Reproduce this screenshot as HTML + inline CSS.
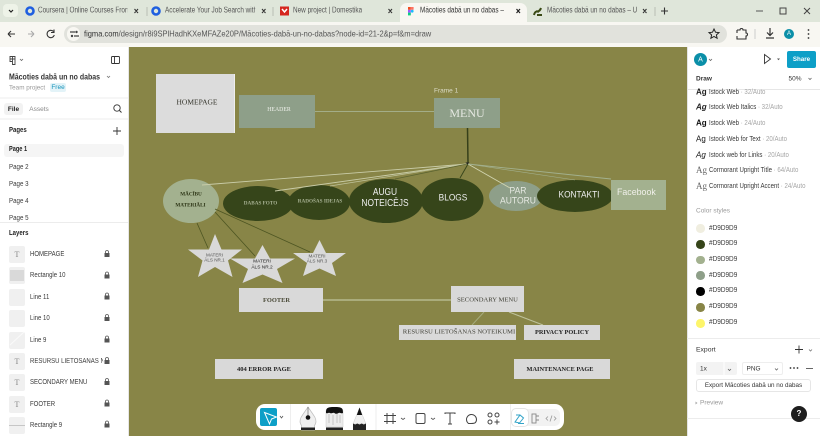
<!DOCTYPE html>
<html><head><meta charset="utf-8">
<style>
html,body{margin:0;padding:0;width:820px;height:436px;overflow:hidden;background:#fff;font-family:"Liberation Sans",sans-serif;}
body{filter:blur(.25px);}
.a{position:absolute;white-space:nowrap;}
.t{position:absolute;white-space:nowrap;transform:translateY(-50%) scaleX(var(--x,1));transform-origin:0 50%;line-height:1.1;}
.c{position:absolute;white-space:nowrap;transform:translate(-50%,-50%) scaleX(var(--x,1));line-height:1;text-align:center;}
.s{font-family:"Liberation Serif",serif;}
.b{position:absolute;background:#d9d9d9;}
.tab{font-size:7.800px;--x:.82;color:#555;overflow:hidden;}
.l{font-size:7px;--x:.86;color:#3a3a3a;}
.r{font-size:7px;--x:.87;color:#3a3a3a;}
.r span{color:#a5a5a5;}
svg{position:absolute;overflow:visible;}
</style></head><body>
<!-- tab strip -->
<div class="a" style="left:0;top:0;width:820px;height:22px;background:#dfe6da"></div>
<div class="a" style="left:3px;top:4px;width:15px;height:13px;border-radius:4px;background:#eef3e8"></div>
<svg style="left:0;top:0" width="820" height="46">
<path d="M9 10l2 2 2-2" stroke="#222" stroke-width="1.200" fill="none"/>
<circle cx="30" cy="11" r="3.500" fill="none" stroke="#1f5fe0" stroke-width="2.600"/>
<circle cx="156" cy="11" r="3.500" fill="none" stroke="#1f5fe0" stroke-width="2.600"/>
<rect x="280" y="6.500" width="9" height="9" fill="#d5261e"/>
<path d="M282 9l2.500 3 2.500-3" stroke="#fff" stroke-width="1.500" fill="none"/>
<path d="M134.500 9l3.500 4M138 9l-3.500 4M262 9l3.500 4M265.500 9l-3.500 4M388.500 9l3.500 4M392 9l-3.500 4M643 9l3.500 4M646.500 9l-3.500 4" stroke="#333" stroke-width="1.100" fill="none"/>
<path d="M147 7v9M273 7v9M655 7v9" stroke="#b9bfb4" stroke-width="1"/>
<path d="M664.500 7.500v7M661 11h7" stroke="#333" stroke-width="1.100"/>
<path d="M756 11h7" stroke="#555" stroke-width="1"/>
<rect x="780" y="8" width="6" height="6" fill="none" stroke="#444" stroke-width="1"/>
<path d="M804 8l6 6M810 8l-6 6" stroke="#444" stroke-width="1"/>
<path d="M534 15c1-4 3-4 5-3M541 8c-1 3-3 4-5 3M537 15h5" stroke="#3a4a15" stroke-width="2" fill="none"/>
</svg>
<div class="a" style="left:400px;top:3px;width:127px;height:20px;background:#f8f7f2;border-radius:7px 7px 0 0"></div>
<svg style="left:0;top:0" width="820" height="46">
<rect x="408" y="7" width="2.800" height="2.800" fill="#f24e1e"/><rect x="410.800" y="7" width="2.800" height="2.800" fill="#ff7262"/>
<rect x="408" y="9.800" width="2.800" height="2.800" fill="#a259ff"/><circle cx="412.200" cy="11.200" r="1.400" fill="#1abcfe"/>
<rect x="408" y="12.600" width="2.800" height="2.800" fill="#0acf83"/>
<path d="M516.500 9l3.500 4M520 9l-3.500 4" stroke="#222" stroke-width="1.200"/>
</svg>
<div class="t tab" style="left:38px;top:11px;width:109px">Coursera | Online Courses From</div>
<div class="t tab" style="left:165px;top:11px;width:110px">Accelerate Your Job Search with</div>
<div class="t tab" style="left:293px;top:11px;">New project | Domestika</div>
<div class="t tab" style="left:420px;top:11px;width:103px;color:#333">Mācoties dabā un no dabas – F</div>
<div class="t tab" style="left:547px;top:11px;width:110px">Mācoties dabā un no dabas – U</div>
<!-- toolbar -->
<div class="a" style="left:0;top:22px;width:820px;height:25px;background:#f8f7f2"></div>
<div class="a" style="left:64px;top:25px;width:663px;height:18px;border-radius:9px;background:#e1e2dc"></div>
<div class="a" style="left:67px;top:27px;width:13px;height:14px;border-radius:7px;background:#f8f7f2"></div>
<svg style="left:0;top:22px" width="820" height="24">
<path d="M8 12h7M8 12l3-3M8 12l3 3" stroke="#333" stroke-width="1.100" fill="none"/>
<path d="M28 12h6M34 12l-3-3M34 12l-3 3" stroke="#aaa" stroke-width="1.100" fill="none"/>
<path d="M53.500 9.500a3.700 3.700 0 1 0 .8 3.500M54 7.500v3h-3" stroke="#333" stroke-width="1.100" fill="none"/>
<path d="M70 10h5M74 14h5" stroke="#444" stroke-width="1.300"/><circle cx="76.500" cy="10" r="1.200" fill="#444"/><circle cx="72" cy="14" r="1.200" fill="#444"/>
<path d="M714 7l1.500 3.200 3.500.4-2.600 2.300.7 3.400-3.100-1.800-3.100 1.800.7-3.400-2.600-2.300 3.500-.4z" fill="none" stroke="#222" stroke-width="1"/>
<path d="M737 8h3a1.500 1.500 0 0 1 3 0h3v3a1.500 1.500 0 0 1 0 3v3h-9v-3M737 8v3" fill="none" stroke="#333" stroke-width="1.100"/>
<path d="M755 7v10" stroke="#ccc"/>
<path d="M770 6v7M767 10.500l3 3 3-3M766 16h8" fill="none" stroke="#333" stroke-width="1.200"/>
<circle cx="808.500" cy="8" r=".9" fill="#333"/><circle cx="808.500" cy="12" r=".9" fill="#333"/><circle cx="808.500" cy="16" r=".9" fill="#333"/>
</svg>
<div class="a" style="left:784px;top:29px;width:10px;height:10px;border-radius:50%;background:#0b8fa8;"></div>
<div class="c" style="left:789px;top:34px;font-size:6px;color:#fff">A</div>
<div class="t" style="left:84px;top:34px;font-size:8.400px;--x:.897;color:#333;">figma.com<span style="color:#555">/design/r8i9SPlHadhKXeMFAZe20P/Mācoties-dabā-un-no-dabas?node-id=21-2&amp;p=f&amp;m=draw</span></div>

<!-- canvas -->
<div class="a" style="left:128px;top:47px;width:559px;height:389px;background:#888547"></div>
<svg style="left:0;top:0" width="820" height="436">
<ellipse cx="258" cy="203.500" rx="35" ry="17.500" fill="#36451a"/>
<ellipse cx="319" cy="202.500" rx="31" ry="17.500" fill="#36451a"/>
<ellipse cx="386" cy="201" rx="37" ry="22" fill="#36451a"/>
<ellipse cx="452" cy="199.500" rx="31.500" ry="21.500" fill="#36451a"/>
<ellipse cx="516" cy="196" rx="27" ry="15" fill="#8e9f89"/>
<ellipse cx="575" cy="196" rx="38" ry="16" fill="#36451a"/>
<ellipse cx="191" cy="201" rx="28" ry="22" fill="#a3b18f"/>
<path d="M315 111.500H434" stroke="#a3ad88" stroke-width="1"/>
<path d="M467.500 128L468 163" stroke="#36401a" stroke-width="1.500"/>
<path d="M465.500 162.500h4l-2 2.500z" fill="#222"/>
<path d="M202 185L467 164" stroke="#c9cca8" stroke-width=".9"/>
<path d="M275 191L467 164" stroke="#c9cca8" stroke-width=".9"/>
<path d="M330 186L467 164" stroke="#c0c49c" stroke-width=".7"/>
<path d="M395 179L467 164" stroke="#5b6330" stroke-width=".7"/>
<path d="M460 178L468 164" stroke="#36451a" stroke-width=".9"/>
<path d="M510 188L468 164" stroke="#d2d5b0" stroke-width=".9"/>
<path d="M611 179L468 164" stroke="#a3b18f" stroke-width=".9"/>
<path d="M575 180L468 164" stroke="#a3b18f" stroke-width=".6"/>
<path d="M197 223L208 248M215 212L255 256M215 209L310 252" stroke="#4d5522" stroke-width=".8"/>
<!-- stars -->
<path d="M215 234l6.500 15.500h20.500l-14 11 4.500 16.500-17.500-10-17 10 4.500-16.500-14.500-11h21z" fill="#d9d9d9"/>
<path d="M262.500 245l7.500 13.500h25l-18 10.500 5.500 14-20-8.500-20 8.500 5.500-14-18-10.500h25z" fill="#d9d9d9"/>
<path d="M319.500 240l6.500 13h20l-14 10 4 13-16.500-7.500-16.500 7.500 4-13-14-10h20z" fill="#d9d9d9"/>
<path d="M323 300H451" stroke="#bfc39c" stroke-width="1.200"/>
<path d="M484 312L472 325" stroke="#a6ab7c" stroke-width="1"/>
<path d="M509 312L543 325" stroke="#bfc39c" stroke-width="1"/>
</svg>
<div class="b" style="left:156px;top:74px;width:78px;height:59px;background:#dcdcdc;border-right:1px solid #eee"></div>
<div class="c s" style="left:197px;top:102px;font-size:7.500px;color:#33332a;">HOMEPAGE</div>
<div class="b" style="left:239px;top:95px;width:76px;height:33px;background:#8e9f89"></div>
<div class="c s" style="left:279px;top:111px;font-size:5.800px;color:#eef0ea;">HEADER</div>
<div class="t" style="left:434px;top:90.500px;font-size:6.500px;color:#dcdcc8">Frame 1</div>
<div class="b" style="left:434px;top:98px;width:66px;height:30px;background:#8e9f89"></div>
<div class="c s" style="left:467px;top:113px;font-size:12px;color:#e6e9e2;">MENU</div>
<div class="c s" style="left:191px;top:195px;font-size:5.200px;color:#2c3415;font-weight:bold">MĀCĪBU</div>
<div class="c s" style="left:190.500px;top:205.500px;font-size:5.200px;color:#2c3415;font-weight:bold">MATERIĀLI</div>
<div class="c s" style="left:260.500px;top:204px;font-size:5.200px;color:#a8b294;font-weight:bold">DABAS FOTO</div>
<div class="c s" style="left:320px;top:202px;font-size:5.200px;color:#a8b294;font-weight:bold">RADOŠAS IDEJAS</div>
<div class="c" style="left:385px;top:193px;font-size:10px;--x:.84;color:#eee">AUGU</div>
<div class="c" style="left:385px;top:203.500px;font-size:10px;--x:.84;color:#eee">NOTEICĒJS</div>
<div class="c" style="left:453px;top:198px;font-size:9.500px;--x:.875;color:#eee">BLOGS</div>
<div class="c" style="left:518px;top:191px;font-size:9.500px;--x:.9;color:#e6e9e2">PAR</div>
<div class="c" style="left:518px;top:201px;font-size:9.500px;--x:.9;color:#e6e9e2">AUTORU</div>
<div class="c" style="left:579px;top:195px;font-size:9.500px;--x:.875;color:#eee">KONTAKTI</div>
<div class="b" style="left:611px;top:180px;width:55px;height:30px;background:#a3b18f"></div>
<div class="t" style="left:617px;top:193px;font-size:9.500px;--x:.93;color:#f0f0ea">Facebook</div>
<div class="c" style="left:214.500px;top:256px;font-size:4.600px;color:#555">MATERI</div>
<div class="c" style="left:214.500px;top:261px;font-size:4.600px;color:#555">ĀLS NR.1</div>
<div class="c" style="left:262px;top:263px;font-size:4.800px;color:#222">MATERI</div>
<div class="c" style="left:262px;top:268.500px;font-size:4.800px;color:#222">ĀLS NR.2</div>
<div class="c" style="left:317px;top:257px;font-size:4.600px;color:#555">MATERI</div>
<div class="c" style="left:317px;top:262px;font-size:4.600px;color:#555">ĀLS NR.3</div>
<div class="b" style="left:239px;top:288px;width:84px;height:24px"></div>
<div class="c s" style="left:276.500px;top:300.500px;font-size:6.400px;color:#4a4a38;font-weight:bold">FOOTER</div>
<div class="b" style="left:451px;top:286px;width:73px;height:26px"></div>
<div class="c s" style="left:487.500px;top:301px;font-size:6.600px;color:#3d3d33;">SECONDARY MENU</div>
<div class="b" style="left:399px;top:325px;width:117px;height:15px"></div>
<div class="c s" style="left:459px;top:332.500px;font-size:6.700px;color:#3d3d33;">RESURSU LIETOŠANAS NOTEIKUMI</div>
<div class="b" style="left:524px;top:325px;width:76px;height:15px"></div>
<div class="c s" style="left:562px;top:332.500px;font-size:6.300px;color:#222;font-weight:bold">PRIVACY POLICY</div>
<div class="b" style="left:215px;top:359px;width:108px;height:20px"></div>
<div class="c s" style="left:264px;top:369.500px;font-size:6.500px;color:#222;font-weight:bold">404 ERROR PAGE</div>
<div class="b" style="left:514px;top:359px;width:96px;height:20px"></div>
<div class="c s" style="left:560px;top:369.500px;font-size:6.300px;color:#222;font-weight:bold">MAINTENANCE PAGE</div>

<!-- bottom toolbar -->
<div class="a" style="left:256px;top:404px;width:308px;height:26px;background:#fff;border-radius:9px"></div>
<div class="a" style="left:260px;top:408px;width:17px;height:18px;background:#0d9fc7;border-radius:2px"></div>
<div class="a" style="left:511px;top:409px;width:49px;height:17px;background:#f2f2f2;border-radius:5px"></div>
<div class="a" style="left:512px;top:409px;width:16px;height:17px;background:#fff;border-radius:4px;box-shadow:0 0 0 1px #e4e4e4"></div>
<svg style="left:250px;top:400px" width="320" height="36">
<path d="M14.500 12.500l12 4.500-5 2-2 5z" fill="none" stroke="#fff" stroke-width="1"/>
<path d="M30 16l1.500 2 1.500-2" fill="none" stroke="#555" stroke-width=".8"/>
<path d="M40.500 4v26M126 4v26M260.500 4v26" stroke="#eee" stroke-width="1"/>
<!-- pen -->
<path d="M51.500 30v-4.500c-1.500-2-2-5 -.5-8 2-3.500 4-6 7-10.500 3 4.500 5 7 7 10.500 1.500 3 1 6-.5 8V30z" fill="#f0f0f0" stroke="#bdbdbd" stroke-width=".7"/>
<path d="M58 7v9" stroke="#555" stroke-width=".6"/>
<circle cx="58" cy="17.500" r="2.300" fill="#111"/>
<rect x="51" y="27.500" width="14" height="2.500" fill="#222"/>
<!-- brush -->
<path d="M76 27V12c0-3 0-4 8.500-4s8.500 1 8.500 4v15z" fill="#ececec" stroke="#c8c8c8" stroke-width=".5"/>
<path d="M76 13c0-5 1-6 8.500-6s8.500 1 8.500 6c-2 1-3-1-4.500 0s-3 1-4 0-3 1-4.500 0-2.500 1-4 0z" fill="#111"/>
<path d="M79 14v9M83 15v10M87 14v9M90 15v8" stroke="#bbb" stroke-width=".8"/>
<rect x="76" y="27.500" width="17" height="2.500" fill="#222"/>
<!-- pencil -->
<path d="M103 24l6.500-16 6.500 16z" fill="#f0f0f0" stroke="#ccc" stroke-width=".5"/>
<path d="M106.800 15l2.700-7.500 2.700 7.500z" fill="#111"/>
<path d="M103 23.500l2.200 1 2.100-1 2.200 1 2.200-1 2.100 1 2.200-1V30h-13z" fill="#222"/>
<path d="M137 13v11M143 13v11M134 15.500h12M134 21.500h12" stroke="#444" stroke-width="1"/>
<path d="M151 18l2 1.500 2-1.500M181 18l2 1.500 2-1.500" stroke="#555" stroke-width=".8" fill="none"/>
<rect x="166" y="13.500" width="9" height="10" rx="1.500" fill="none" stroke="#444" stroke-width="1"/>
<path d="M195 14v-1h10v1M200 13v11M198 24h4" stroke="#444" stroke-width="1" fill="none"/>
<path d="M221 23.500h-2.500a5 5 0 1 1 7 -1c-1 1-3 1-4.500 1z" fill="none" stroke="#444" stroke-width="1"/>
<circle cx="240" cy="15" r="2" fill="none" stroke="#444"/><circle cx="247" cy="15" r="2" fill="none" stroke="#444"/><circle cx="240" cy="22" r="2" fill="none" stroke="#444"/>
<path d="M247 19.500v5M244.500 22h5" stroke="#444"/>
<path d="M265 22l5-7 3.500 3-4 5zM266 15h4M268 23.500h6" stroke="#31a3c8" stroke-width="1" fill="none"/>
<rect x="282" y="14" width="4" height="9" fill="none" stroke="#888" stroke-width=".9"/><path d="M286 16h3M286 20h3" stroke="#888"/>
<path d="M298 16.500l-2 2 2 2M304 16.500l2 2-2 2M302 15.500l-2 6" stroke="#999" stroke-width=".8" fill="none"/>
</svg>

<!-- left panel -->
<div class="a" style="left:0;top:47px;width:128px;height:389px;background:#fff;border-right:1px solid #e6e6e6;box-sizing:content-box"></div>
<svg style="left:0;top:46px" width="128" height="390">
<path d="M10 10.500h5v8h-2.500v-3h-2.500zM12.500 10.500v8M10 13h5" fill="none" stroke="#444" stroke-width=".9"/>
<path d="M20 13l1.500 1.500 1.500-1.500" fill="none" stroke="#666" stroke-width=".8"/>
<rect x="111.500" y="10.500" width="8" height="7" fill="none" stroke="#333" stroke-width=".9" rx="1"/>
<path d="M114.500 10.500v7" stroke="#333" stroke-width=".9"/>
<path d="M107 30l1.500 1.500 1.500-1.500" fill="none" stroke="#777" stroke-width=".8"/>
<path d="M0 52h128M0 73h128M0 176.500h128" stroke="#ececec"/>
<circle cx="117" cy="62" r="3.200" fill="none" stroke="#333" stroke-width=".9"/><path d="M119.500 64.500l2 2" stroke="#333"/>
<path d="M113 85h8M117 81v8" stroke="#333" stroke-width=".9"/>
</svg>
<div class="t" style="left:9px;top:76.500px;font-size:8.300px;--x:.84;font-weight:bold;color:#333">Mācoties dabā un no dabas</div>
<div class="t" style="left:9px;top:87.500px;font-size:6.800px;--x:.93;color:#999">Team project</div>
<div class="a" style="left:50px;top:83px;width:16px;height:9px;background:#e3f3f8;border-radius:2px"></div>
<div class="c" style="left:58px;top:87.500px;font-size:6.500px;color:#1593ba">Free</div>
<div class="a" style="left:4px;top:103px;width:19px;height:12px;background:#f2f2f2;border-radius:3px"></div>
<div class="c" style="left:13.500px;top:109.500px;font-size:6.500px;font-weight:bold;color:#222">File</div>
<div class="c" style="left:39px;top:109.500px;font-size:6.500px;color:#888">Assets</div>
<div class="t" style="left:9px;top:131px;font-size:7px;--x:.86;font-weight:bold;color:#222">Pages</div>
<div class="a" style="left:4px;top:144px;width:120px;height:13px;background:#f5f5f5;border-radius:3px"></div>
<div class="t l" style="left:9px;top:150px;font-weight:bold;--x:.8;color:#222">Page 1</div>
<div class="t l" style="left:9px;top:167.500px;--x:.88">Page 2</div>
<div class="t l" style="left:9px;top:184.500px;--x:.88">Page 3</div>
<div class="t l" style="left:9px;top:201.500px;--x:.88">Page 4</div>
<div class="t l" style="left:9px;top:218.500px;--x:.88">Page 5</div>
<div class="t" style="left:9px;top:233.500px;font-size:7px;--x:.86;font-weight:bold;color:#222">Layers</div>
<!-- layers -->
<div class="a" style="left:9px;top:246px;width:16px;height:17px;background:#f0f0f0;border-radius:2px"></div>
<div class="a" style="left:9px;top:267px;width:16px;height:17px;background:#f0f0f0;border-radius:2px"></div>
<div class="a" style="left:10px;top:270px;width:14px;height:11px;background:#d9d9d9"></div>
<div class="a" style="left:9px;top:289px;width:16px;height:17px;background:#f0f0f0;border-radius:2px"></div>
<div class="a" style="left:9px;top:310px;width:16px;height:17px;background:#f0f0f0;border-radius:2px"></div>
<div class="a" style="left:9px;top:332px;width:16px;height:17px;background:#f0f0f0;border-radius:2px"></div>
<div class="a" style="left:9px;top:353px;width:16px;height:17px;background:#f0f0f0;border-radius:2px"></div>
<div class="a" style="left:9px;top:374px;width:16px;height:17px;background:#f0f0f0;border-radius:2px"></div>
<div class="a" style="left:9px;top:396px;width:16px;height:17px;background:#f0f0f0;border-radius:2px"></div>
<div class="a" style="left:9px;top:417px;width:16px;height:17px;background:#f0f0f0;border-radius:2px"></div>
<div class="c s" style="left:17px;top:254.500px;font-size:8px;color:#888">T</div>
<div class="c s" style="left:17px;top:361.500px;font-size:8px;color:#888">T</div>
<div class="c s" style="left:17px;top:383px;font-size:8px;color:#888">T</div>
<div class="c s" style="left:17px;top:404.500px;font-size:8px;color:#888">T</div>
<svg style="left:0;top:0" width="128" height="436">
<path d="M10 345l14-13" stroke="#fafafa"/>
<path d="M9 425.500h16" stroke="#bbb" stroke-width=".8"/>
<g fill="#555"><rect x="104.500" y="253" width="5" height="4"/><rect x="104.500" y="274.500" width="5" height="4"/><rect x="104.500" y="295.500" width="5" height="4"/><rect x="104.500" y="317" width="5" height="4"/><rect x="104.500" y="338.500" width="5" height="4"/><rect x="104.500" y="360" width="5" height="4"/><rect x="104.500" y="381" width="5" height="4"/><rect x="104.500" y="402.500" width="5" height="4"/><rect x="104.500" y="423.500" width="5" height="4"/></g>
<g fill="none" stroke="#555" stroke-width=".8"><path d="M105.500 253v-1a1.500 1.500 0 0 1 3 0v1M105.500 274.500v-1a1.500 1.500 0 0 1 3 0v1M105.500 295.500v-1a1.500 1.500 0 0 1 3 0v1M105.500 317v-1a1.500 1.500 0 0 1 3 0v1M105.500 338.500v-1a1.500 1.500 0 0 1 3 0v1M105.500 360v-1a1.500 1.500 0 0 1 3 0v1M105.500 381v-1a1.500 1.500 0 0 1 3 0v1M105.500 402.500v-1a1.500 1.500 0 0 1 3 0v1M105.500 423.500v-1a1.500 1.500 0 0 1 3 0v1"/></g>
</svg>
<div class="t l" style="left:30px;top:254.500px;">HOMEPAGE</div>
<div class="t l" style="left:30px;top:276px;">Rectangle 10</div>
<div class="t l" style="left:30px;top:297.500px;">Line 11</div>
<div class="t l" style="left:30px;top:319px;">Line 10</div>
<div class="t l" style="left:30px;top:340.500px;">Line 9</div>
<div class="t l" style="left:30px;top:361.500px;width:85px;overflow:hidden">RESURSU LIETOŠANAS NOTEIKUMI</div>
<div class="t l" style="left:30px;top:383px;">SECONDARY MENU</div>
<div class="t l" style="left:30px;top:404.500px;">FOOTER</div>
<div class="t l" style="left:30px;top:425.500px;">Rectangle 9</div>

<!-- right panel -->
<div class="a" style="left:687px;top:47px;width:133px;height:389px;background:#fff;border-left:1px solid #e4e4e4;box-sizing:border-box"></div>
<div class="a" style="left:694px;top:53px;width:13px;height:13px;border-radius:50%;background:#0b8fa8"></div>
<div class="c" style="left:700.500px;top:59.500px;font-size:7px;color:#fff">A</div>
<div class="a" style="left:787px;top:51px;width:29px;height:17px;background:#0d9fc7;border-radius:2px"></div>
<div class="c" style="left:801.500px;top:59.500px;font-size:6.200px;font-weight:bold;color:#fff">Share</div>
<svg style="left:687px;top:46px" width="133" height="390">
<path d="M77.500 8.500l6 4.500-6 4.500z" fill="none" stroke="#333" stroke-width=".9"/>
<path d="M90 12.500h3l-1.500 1.700z" fill="#555"/>
<path d="M121.500 32l1.500 1.500 1.500-1.500" fill="none" stroke="#666" stroke-width=".8"/>
<path d="M0 43.500h133" stroke="#e6e6e6"/>
<path d="M0 292.500h133M0 372.500h133" stroke="#ececec"/>
<path d="M108 303.500h8M112 299.500v8" stroke="#333" stroke-width=".9"/>
<path d="M122 303.500l1.500 1.500 1.500-1.500" fill="none" stroke="#777" stroke-width=".8"/>
<g fill="#333"><circle cx="103.500" cy="322" r=".9"/><circle cx="107" cy="322" r=".9"/><circle cx="110.500" cy="322" r=".9"/></g>
<path d="M119 322.500h7" stroke="#555" stroke-width=".9"/>
<path d="M8.500 355.500l2 1.500-2 1.500z" fill="#aaa"/>
</svg>
<div class="t" style="left:696px;top:79px;font-size:6.500px;font-weight:bold;color:#333">Draw</div>
<div class="t" style="left:788.500px;top:79px;font-size:6.500px;color:#333">50%</div>
<div class="t" style="left:696px;top:92.500px;font-size:8px;font-weight:bold;color:#222">Ag</div>
<div class="t r" style="left:709px;top:92.500px;">Istock Web <span>· 32/Auto</span></div>
<div class="t" style="left:696px;top:108px;font-size:8px;font-weight:bold;font-style:italic;color:#222">Ag</div>
<div class="t r" style="left:709px;top:108px;">Istock Web Italics <span>· 32/Auto</span></div>
<div class="t" style="left:696px;top:124px;font-size:8px;font-weight:bold;color:#111">Ag</div>
<div class="t r" style="left:709px;top:124px;">Istock Web <span>· 24/Auto</span></div>
<div class="t" style="left:696px;top:139.500px;font-size:8px;color:#111">Ag</div>
<div class="t r" style="left:709px;top:139.500px;">Istock Web for Text <span>· 20/Auto</span></div>
<div class="t" style="left:696px;top:155.500px;font-size:8px;font-style:italic;color:#111">Ag</div>
<div class="t r" style="left:709px;top:155.500px;">Istock web for Links <span>· 20/Auto</span></div>
<div class="t s" style="left:696px;top:171px;font-size:9px;color:#666">Ag</div>
<div class="t r" style="left:709px;top:171px;">Cormorant Upright Title <span>· 64/Auto</span></div>
<div class="t s" style="left:696px;top:187px;font-size:9px;color:#666">Ag</div>
<div class="t r" style="left:709px;top:187px;">Cormorant Upright Accent <span>· 24/Auto</span></div>
<div class="t" style="left:696px;top:211px;font-size:6.500px;color:#999">Color styles</div>
<div class="a" style="left:696px;top:224px;width:8.500px;height:8.500px;border-radius:50%;background:#f0eee0"></div>
<div class="a" style="left:696px;top:240px;width:8.500px;height:8.500px;border-radius:50%;background:#36451a"></div>
<div class="a" style="left:696px;top:255.500px;width:8.500px;height:8.500px;border-radius:50%;background:#a3b18f"></div>
<div class="a" style="left:696px;top:271px;width:8.500px;height:8.500px;border-radius:50%;background:#8e9f89"></div>
<div class="a" style="left:696px;top:287px;width:8.500px;height:8.500px;border-radius:50%;background:#000"></div>
<div class="a" style="left:696px;top:303px;width:8.500px;height:8.500px;border-radius:50%;background:#888547"></div>
<div class="a" style="left:696px;top:319px;width:8.500px;height:8.500px;border-radius:50%;background:#fdf56a"></div>
<div class="t r" style="left:709px;top:228.500px;--x:.92">#D9D9D9</div>
<div class="t r" style="left:709px;top:244px;--x:.92">#D9D9D9</div>
<div class="t r" style="left:709px;top:260px;--x:.92">#D9D9D9</div>
<div class="t r" style="left:709px;top:275.500px;--x:.92">#D9D9D9</div>
<div class="t r" style="left:709px;top:291px;--x:.92">#D9D9D9</div>
<div class="t r" style="left:709px;top:307px;--x:.92">#D9D9D9</div>
<div class="t r" style="left:709px;top:323px;--x:.92">#D9D9D9</div>
<div class="t" style="left:696px;top:349.500px;font-size:6.800px;color:#333">Export</div>
<div class="a" style="left:696px;top:362px;width:41px;height:13px;background:#f3f3f3;border-radius:2px"></div>
<div class="t" style="left:700px;top:369px;font-size:6.500px;color:#333">1x</div>
<div class="a" style="left:742px;top:362px;width:41px;height:13px;border:1px solid #eee;box-sizing:border-box;border-radius:2px"></div>
<div class="t" style="left:746.500px;top:368.500px;font-size:6.500px;color:#333">PNG</div>
<div class="a" style="left:696px;top:379px;width:115px;height:13px;border:1px solid #e6e6e6;box-sizing:border-box;border-radius:3px"></div>
<div class="c" style="left:753.500px;top:385.500px;font-size:6.300px;color:#333">Export Mācoties dabā un no dabas</div>
<div class="t" style="left:700px;top:403px;font-size:6.500px;color:#999">Preview</div>
<div class="a" style="left:791px;top:406px;width:16px;height:16px;border-radius:50%;background:#1e1e1e"></div>
<div class="c" style="left:799px;top:414px;font-size:8px;font-weight:bold;color:#fff">?</div>
<svg style="left:0;top:0" width="820" height="436">
<path d="M709 59l1.500 1.500 1.500-1.500M728 369l1.500 1.500 1.500-1.500M775 368.500l1.500 1.500 1.500-1.500" fill="none" stroke="#666" stroke-width=".8"/>
<path d="M724 362v13" stroke="#fff"/>
</svg>
</body></html>
